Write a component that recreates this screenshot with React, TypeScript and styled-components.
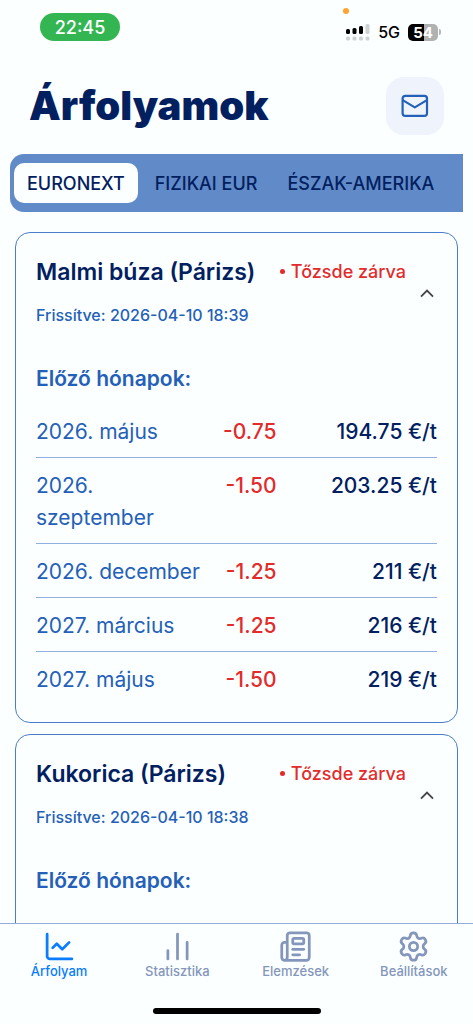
import React, { useState } from "react";
import styled, { createGlobalStyle } from "styled-components";
import {
  ChartLine,
  ChartNoAxesColumn,
  Newspaper,
  Settings,
  type LucideIcon,
} from "lucide-react";

const color = {
  page: "#fbffff",
  navy: "#02205f",
  blue: "#2560b8",
  border: "#4a7dc9",
  rule: "#8fb0e0",
  bar: "#618bc8",
  red: "#e32b2b",
  soft: "#eff4fc",
  muted: "#8496bb",
  active: "#0a7cff",
};

const GlobalStyle = createGlobalStyle`
  *, *::before, *::after { box-sizing: border-box; }
  body {
    margin: 0;
    background: ${color.page};
    color: ${color.navy};
    font-family: Inter, "Liberation Sans", sans-serif;
  }
  button { font: inherit; color: inherit; border: 0; background: none; padding: 0; cursor: pointer; }
  h1, h2, h3, p { margin: 0; }
`;

const Screen = styled.div`
  display: flex;
  flex-direction: column;
  height: 100vh;
  overflow: hidden;
`;

const StatusBar = styled.div`
  display: flex;
  flex: none;
  justify-content: space-between;
  align-items: flex-start;
  padding: 13px 32px 0 40px;
`;

const Clock = styled.div`
  width: 80px;
  padding-top: 2px;
  border-radius: 14px;
  background: #33b552;
  color: #fff;
  font-size: 18px;
  font-weight: 500;
  line-height: 26px;
  text-align: center;
`;

const Indicators = styled.div`
  display: flex;
  align-items: center;
  gap: 8px;
  padding-top: 8px;
  color: #000;
  font-size: 16px;
  font-weight: 500;
  line-height: 22px;
  position: relative;
`;

const RecordingDot = styled.span`
  position: absolute;
  top: -5px;
  left: -3px;
  width: 6px;
  height: 6px;
  border-radius: 50%;
  background: #ffa42e;
`;

const Battery = styled.div`
  display: flex;
  align-items: center;
  gap: 1px;

  &::after {
    content: "";
    width: 2px;
    height: 6px;
    border-radius: 0 2px 2px 0;
    background: #b4b6b6;
  }
`;

const BatteryLevel = styled.span`
  width: 30px;
  border-radius: 5px;
  background: linear-gradient(90deg, #000 54%, #b0b2b2 54%);
  color: #fff;
  font-size: 15px;
  font-weight: 700;
  line-height: 17px;
  text-align: center;
`;

const Header = styled.header`
  display: flex;
  flex: none;
  justify-content: space-between;
  align-items: center;
  padding: 34px 29px 0 29px;
`;

const PageTitle = styled.h1`
  font-size: 40px;
  font-weight: 900;
  line-height: 58px;
`;

const MailButton = styled.button`
  display: grid;
  place-items: center;
  width: 58px;
  height: 58px;
  border-radius: 18px;
  background: ${color.soft};
  color: ${color.blue};
`;

const Tabs = styled.nav`
  display: flex;
  flex: none;
  gap: 4px;
  margin: 19px 10px 0;
  padding: 9px 4px;
  border-radius: 14px 0 0 14px;
  background: ${color.bar};
  overflow: hidden;
`;

const Tab = styled.button<{ $active: boolean }>`
  flex: none;
  padding: 2px 13px 0;
  border-radius: 10px;
  background: ${(p) => (p.$active ? color.page : "transparent")};
  font-size: 18px;
  font-weight: 500;
  line-height: 38px;
  white-space: nowrap;
`;

const Feed = styled.main`
  display: flex;
  flex: 1;
  flex-direction: column;
  gap: 11px;
  min-height: 0;
  padding: 20px 15px 0;
  overflow-y: auto;
  scrollbar-width: none;
`;

const Card = styled.section`
  flex: none;
  min-height: 240px;
  padding: 23px 20px 17px;
  border: 1px solid ${color.border};
  border-radius: 15px;
`;

const CardHead = styled.div`
  display: flex;
  justify-content: space-between;
`;

const CardTitle = styled.h2`
  font-size: 23px;
  font-weight: 600;
  line-height: 32px;
`;

const Updated = styled.p`
  margin-top: 16px;
  color: ${color.blue};
  font-size: 16px;
  font-weight: 500;
  line-height: 22px;
`;

const Market = styled.div`
  display: flex;
  flex-direction: column;
  align-items: flex-end;
`;

const MarketState = styled.p`
  padding-right: 31px;
  color: ${color.red};
  font-size: 18px;
  font-weight: 500;
  line-height: 32px;
`;

const Bullet = styled.span`
  display: inline-block;
  width: 5px;
  height: 5px;
  margin-right: 6px;
  border-radius: 50%;
  background: currentColor;
  vertical-align: 4px;
`;

const Toggle = styled.button`
  display: grid;
  place-items: center;
  width: 20px;
  height: 10px;
  color: #444;
`;

const SectionTitle = styled.h3`
  margin-top: 37px;
  color: ${color.blue};
  font-size: 21px;
  font-weight: 600;
  line-height: 32px;
`;

const Prices = styled.table`
  width: 100%;
  margin-top: 9px;
  border-collapse: separate;
  border-spacing: 0;
  table-layout: fixed;
  font-size: 21px;
  line-height: 32px;

  th, td {
    padding: 12px 0 9px;
    text-align: right;
    vertical-align: top;
  }

  tr:not(:last-child) > * {
    border-bottom: 1px solid ${color.rule};
  }
`;

const Month = styled.th`
  && {
    width: 42%;
    color: ${color.blue};
    font-weight: 400;
    text-align: left;
  }
`;

const Change = styled.td`
  width: 18%;
  color: ${color.red};
  font-weight: 500;
`;

const Price = styled.td`
  font-weight: 500;
`;

const BottomNav = styled.nav`
  display: flex;
  flex: none;
  border-top: 1px solid #93abd8;
  background: ${color.page};
`;

const NavItem = styled.a<{ $active: boolean }>`
  display: flex;
  flex: 1;
  flex-direction: column;
  align-items: center;
  padding-top: 6px;
  color: ${(p) => (p.$active ? color.active : color.muted)};
  font-size: 13px;
  font-weight: 500;
  line-height: 17px;
  text-decoration: none;
`;

const HomeArea = styled.div`
  display: flex;
  flex: none;
  justify-content: center;
  padding: 28px 0 10px;
`;

const HomeIndicator = styled.div`
  width: 168px;
  height: 6px;
  border-radius: 3px;
  background: #000;
`;

const SignalIcon = () => (
  <svg width="24" height="17" viewBox="0 0 24 17" aria-hidden="true">
    <g fill="#000">
      <rect x="0" y="5" width="4" height="5" rx="1.5" />
      <rect x="6.5" y="4" width="4" height="6" rx="1.5" />
      <rect x="13" y="2" width="4" height="8" rx="1.5" />
    </g>
    <g fill="#cfd2d2">
      <rect x="19.5" y="0" width="4" height="10" rx="1.5" />
      <rect x="0" y="12.5" width="4" height="4" rx="1.5" />
      <rect x="6.5" y="12.5" width="4" height="4" rx="1.5" />
      <rect x="13" y="12.5" width="4" height="4" rx="1.5" />
      <rect x="19.5" y="12.5" width="4" height="4" rx="1.5" />
    </g>
  </svg>
);

const MailIcon = () => (
  <svg width="28" height="24" viewBox="0 0 28 24" fill="none" stroke="currentColor" strokeWidth="2.2" strokeLinecap="round" strokeLinejoin="round" aria-hidden="true">
    <rect x="1.6" y="1.8" width="24.4" height="20" rx="2.6" />
    <path d="M2.1 6.4 13.8 13.4 25.5 6.4" />
  </svg>
);

const ChevronIcon = ({ open }: { open: boolean }) => (
  <svg width="14" height="9" viewBox="0 0 14 9" fill="none" stroke="currentColor" strokeWidth="1.8" aria-hidden="true">
    <path d={open ? "M1 7.7 7 1.6 13 7.7" : "M1 1.3 7 7.4 13 1.3"} />
  </svg>
);

type Quote = { month: string; change: string; price: string };
type Commodity = { name: string; updated: string; quotes: Quote[] };

const commodities: Commodity[] = [
  {
    name: "Malmi búza (Párizs)",
    updated: "2026-04-10 18:39",
    quotes: [
      { month: "2026. május", change: "-0.75", price: "194.75 €/t" },
      { month: "2026. szeptember", change: "-1.50", price: "203.25 €/t" },
      { month: "2026. december", change: "-1.25", price: "211 €/t" },
      { month: "2027. március", change: "-1.25", price: "216 €/t" },
      { month: "2027. május", change: "-1.50", price: "219 €/t" },
    ],
  },
  { name: "Kukorica (Párizs)", updated: "2026-04-10 18:38", quotes: [] },
];

const tabs = ["EURONEXT", "FIZIKAI EUR", "ÉSZAK-AMERIKA"];

const navItems: { label: string; icon: LucideIcon }[] = [
  { label: "Árfolyam", icon: ChartLine },
  { label: "Statisztika", icon: ChartNoAxesColumn },
  { label: "Elemzések", icon: Newspaper },
  { label: "Beállítások", icon: Settings },
];

const CommodityCard = ({ name, updated, quotes }: Commodity) => {
  const [open, setOpen] = useState(true);
  return (
    <Card>
      <CardHead>
        <div>
          <CardTitle>{name}</CardTitle>
          <Updated>Frissítve: {updated}</Updated>
        </div>
        <Market>
          <MarketState>
            <Bullet />
            Tőzsde zárva
          </MarketState>
          <Toggle aria-label={name} aria-expanded={open} onClick={() => setOpen(!open)}>
            <ChevronIcon open={open} />
          </Toggle>
        </Market>
      </CardHead>
      {open && (
        <>
          <SectionTitle>Előző hónapok:</SectionTitle>
          <Prices>
            <tbody>
              {quotes.map((q) => (
                <tr key={q.month}>
                  <Month scope="row">{q.month}</Month>
                  <Change>{q.change}</Change>
                  <Price>{q.price}</Price>
                </tr>
              ))}
            </tbody>
          </Prices>
        </>
      )}
    </Card>
  );
};

export default function App() {
  const [tab, setTab] = useState(tabs[0]);
  return (
    <>
      <GlobalStyle />
      <Screen>
        <StatusBar>
          <Clock>22:45</Clock>
          <Indicators>
            <RecordingDot />
            <SignalIcon />
            <span>5G</span>
            <Battery>
              <BatteryLevel>54</BatteryLevel>
            </Battery>
          </Indicators>
        </StatusBar>
        <Header>
          <PageTitle>Árfolyamok</PageTitle>
          <MailButton aria-label="Üzenetek">
            <MailIcon />
          </MailButton>
        </Header>
        <Tabs>
          {tabs.map((t) => (
            <Tab key={t} $active={t === tab} onClick={() => setTab(t)}>
              {t}
            </Tab>
          ))}
        </Tabs>
        <Feed>
          {commodities.map((c) => (
            <CommodityCard key={c.name} {...c} />
          ))}
        </Feed>
        <BottomNav>
          {navItems.map(({ label, icon: Icon }, i) => (
            <NavItem key={label} href="#" $active={i === 0}>
              <Icon size={33} strokeWidth={2} aria-hidden="true" />
              {label}
            </NavItem>
          ))}
        </BottomNav>
        <HomeArea>
          <HomeIndicator />
        </HomeArea>
      </Screen>
    </>
  );
}
